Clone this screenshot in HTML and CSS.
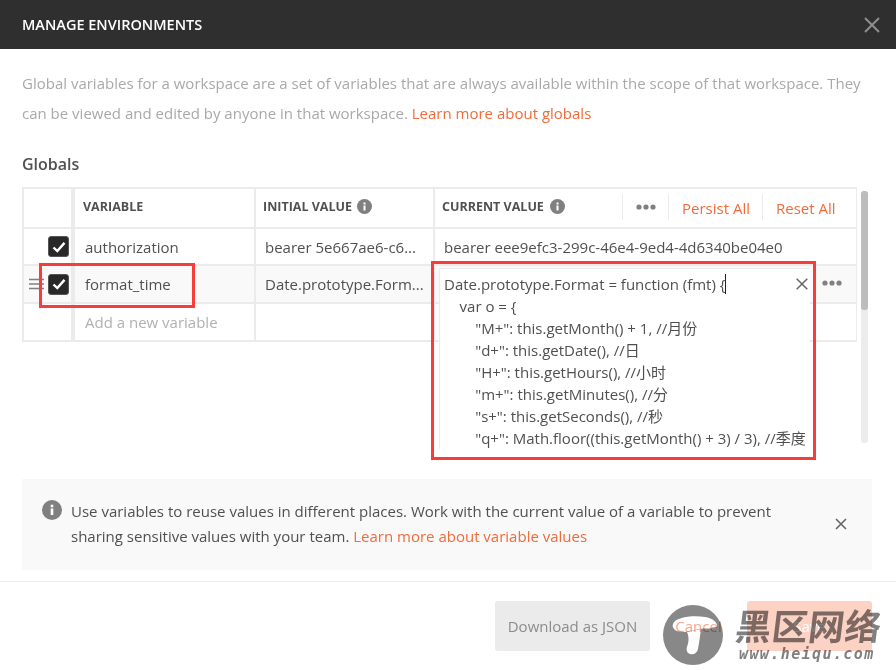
FILE: index.html
```html
<!DOCTYPE html>
<html lang="en">
<head>
<meta charset="utf-8">
<title>Manage Environments</title>
<link rel="stylesheet" href="styles.css">
</head>
<body>
<div class="modal">
  <header class="head">
    <h1>MANAGE ENVIRONMENTS</h1>
    <svg class="head-x" width="16" height="16" viewBox="0 0 16 16"><path d="M1 1l14 14M15 1L1 15" stroke="#8e8e8e" stroke-width="2" fill="none"/></svg>
  </header>
  <main class="content">
    <p class="desc">Global variables for a workspace are a set of variables that are always available within the scope of that workspace. They can be viewed and edited by anyone in that workspace. <a class="link">Learn more about globals</a></p>
    <h2 class="title">Globals</h2>
    <div class="scroller">
      <div class="table">
        <div class="row row-head">
          <div class="cell cell-check"></div>
          <div class="cell th th-var">VARIABLE</div>
          <div class="cell th">INITIAL VALUE <svg class="i" width="15" height="15" viewBox="0 0 15 15"><circle cx="7.5" cy="7.5" r="7.5" fill="#808080"/><rect x="6.5" y="6.5" width="2" height="5" fill="#fff"/><rect x="6.5" y="3.5" width="2" height="2" fill="#fff"/></svg></div>
          <div class="cell th th-current">
            <span class="th-label">CURRENT VALUE <svg class="i" width="15" height="15" viewBox="0 0 15 15"><circle cx="7.5" cy="7.5" r="7.5" fill="#808080"/><rect x="6.5" y="6.5" width="2" height="5" fill="#fff"/><rect x="6.5" y="3.5" width="2" height="2" fill="#fff"/></svg></span>
            <span class="act act-dots"><svg width="20" height="6" viewBox="0 0 20 6"><circle cx="3" cy="3" r="2.6" fill="#808080"/><circle cx="10" cy="3" r="2.6" fill="#808080"/><circle cx="17" cy="3" r="2.6" fill="#808080"/></svg></span>
            <span class="act act-link">Persist All</span>
            <span class="act act-link act-last">Reset All</span>
          </div>
        </div>
        <div class="row row-first">
          <div class="cell cell-check"><span class="check"><svg width="14" height="12" viewBox="0 0 14 12"><path d="M1.5 6.5l3.8 3.6 7.2-8.2" stroke="#fff" stroke-width="2.4" fill="none"/></svg></span></div>
          <div class="cell td td-var">authorization</div>
          <div class="cell td">bearer 5e667ae6-c6...</div>
          <div class="cell td">bearer eee9efc3-299c-46e4-9ed4-4d6340be04e0</div>
        </div>
        <div class="row row-hover">
          <div class="cell cell-check">
            <svg class="drag" width="15" height="12" viewBox="0 0 15 12"><path d="M0 1.5h15M0 6h15M0 10.500h15" stroke="#808080" stroke-width="1.500"/></svg>
            <span class="check"><svg width="14" height="12" viewBox="0 0 14 12"><path d="M1.5 6.5l3.8 3.6 7.2-8.2" stroke="#fff" stroke-width="2.4" fill="none"/></svg></span>
          </div>
          <div class="cell td td-var">format_time</div>
          <div class="cell td">Date.prototype.Form...</div>
          <div class="cell td"><svg class="row-dots" width="20" height="6" viewBox="0 0 20 6"><circle cx="3" cy="3" r="2.6" fill="#808080"/><circle cx="10" cy="3" r="2.6" fill="#808080"/><circle cx="17" cy="3" r="2.6" fill="#808080"/></svg></div>
        </div>
        <div class="row">
          <div class="cell cell-check"></div>
          <div class="cell td td-var placeholder">Add a new variable</div>
          <div class="cell td"></div>
          <div class="cell td"></div>
        </div>
      </div>
      <div class="editor">
        <div class="code"><span class="caret">Date.prototype.Format = function (fmt) {</span>
    var o = {
        "M+": this.getMonth() + 1, //月份
        "d+": this.getDate(), //日
        "H+": this.getHours(), //小时
        "m+": this.getMinutes(), //分
        "s+": this.getSeconds(), //秒
        "q+": Math.floor((this.getMonth() + 3) / 3), //季度</div>
        <svg class="editor-x" width="12" height="12" viewBox="0 0 12 12"><path d="M.7.700l10.600 10.600M11.300.7L.7 11.300" stroke="#666" stroke-width="1.500" fill="none"/></svg>
      </div>
      <div class="mark mark-name"></div>
      <div class="mark mark-editor"></div>
      <div class="scrollbar"><div class="thumb"></div></div>
    </div>
    <div class="note">
      <svg class="note-i" width="20" height="20" viewBox="0 0 20 20"><circle cx="10" cy="10" r="10" fill="#808080"/><rect x="8.700" y="8.500" width="2.600" height="6.500" fill="#fff"/><rect x="8.700" y="4.700" width="2.600" height="2.600" fill="#fff"/></svg>
      <p class="note-text">Use variables to reuse values in different places. Work with the current value of a variable to prevent sharing sensitive values with your team. <a class="link">Learn more about variable values</a></p>
      <svg class="note-x" width="12" height="12" viewBox="0 0 12 12"><path d="M1 1l10 10M11 1L1 11" stroke="#666" stroke-width="1.600" fill="none"/></svg>
    </div>
  </main>
  <footer class="foot">
    <button class="btn btn-json">Download as JSON</button>
    <button class="btn btn-cancel">Cancel</button>
    <button class="btn btn-save">Save</button>
  </footer>
</div>
<div class="watermark">
  <svg class="wm-logo" width="60" height="60" viewBox="0 0 60 60"><circle cx="30" cy="30" r="30" fill="#888"/><path d="M10 19C12 12 30 10 42 12C50 13 55 18 54 22C50 24 42 23 36 24C28 26 18 29 12 25C10 23 9 21 10 19Z" fill="#fff"/><path d="M24 27C28 26 34 25 38 24C37 32 36 38 35 44C34 48 31 50 27 49C24 48 23 45 24 42C26 36 26 32 24 27Z" fill="#fff"/></svg>
  <div class="wm-text">
    <div class="wm-cn">黑区网络</div>
    <div class="wm-url">www.heiqu.com</div>
  </div>
</div>
</body>
</html>
```
FILE: styles.css
```css
* { box-sizing: border-box; }
html, body { margin: 0; height: 670px; overflow: hidden; background: #fff; }
body { font-family: "Open Sans", "Noto Sans CJK SC", sans-serif; color: #505050; position: relative; }
.modal { width: 896px; height: 670px; display: flex; flex-direction: column; }
.head { height: 49px; flex: none; background: #2f2f2f; display: flex; align-items: center; justify-content: space-between; padding: 0 16px 0 22px; }
.head h1 { margin: 0; font-size: 14.500px; font-weight: 600; color: #fff; }
.head-x { display: block; }
.content { flex: 1; padding: 20px 24px 0 22px; min-height: 0; }
.desc { margin: 0; font-size: 15px; line-height: 29.500px; color: #a9a9a9; width: 850px; }
.link { color: #f26b3a; }
.title { margin: 25px 0 0; font-size: 16px; line-height: 22px; font-weight: 600; color: #505050; }
.scroller { position: relative; margin-top: 12px; height: 292px; }
.table { width: 835px; border: 2px solid #ebebeb; border-right-width: 1px; background: #fff; }
.row { display: grid; grid-template-columns: 49px 181px 179px 1fr; height: 38px; border-bottom: 2px solid #ebebeb; }
.row:last-child { border-bottom: 0; height: 36px; }
.row-head { height: 40px; }
.row-first { height: 37px; }
.row-hover { background: #f9f9f9; height: 38px; }
.cell { display: flex; align-items: center; border-left: 2px solid #ebebeb; min-width: 0; position: relative; }
.cell-check { border-left: 0; border-right: 3px solid #ebebeb; justify-content: flex-end; padding-right: 2px; margin-right: -1px; background: #fff; }
.row-hover .cell-check { background: transparent; }
.th { font-size: 12.500px; font-weight: 700; color: #505050; padding-left: 7px; padding-bottom: 3px; gap: 5px; white-space: nowrap; }
.th-var { padding-left: 8px; }
.th-current { padding-right: 0; gap: 0; }
.th-label { display: flex; align-items: center; gap: 6px; width: 180px; flex: none; }
.i { display: block; }
.act { display: flex; align-items: center; height: 26px; border-left: 1px solid #ebebeb; flex: none; }
.act-dots { width: 46px; justify-content: center; }
.act-dots svg { display: block; }
.act-link { color: #f26b3a; font-size: 15px; font-weight: 400; width: 94px; padding-left: 13px; padding-top: 3px; }
.act-last { width: 85px; }
.td { font-size: 15px; padding-left: 9px; white-space: nowrap; overflow: hidden; }
.td-var { padding-left: 10px; }
.placeholder { color: #b0b0b0; }
.row-dots { position: absolute; right: 14px; top: 14px; }
.check { width: 21px; height: 21px; background: #282828; border: 1px solid #555; border-radius: 3px; display: flex; align-items: center; justify-content: center; flex: none; }
.check svg { display: block; }
.drag { position: absolute; left: 5px; top: 12px; }
.editor { position: absolute; left: 417px; top: 81px; width: 371px; height: 181px; background: #fff; border: 1px solid #ebebeb; border-bottom: 0; border-right: 0; overflow: hidden; }
.code { font-size: 15px; line-height: 22px; white-space: pre; padding: 4px 0 0 4px; color: #505050; }
.caret { border-right: 1px solid #222; }
.editor-x { position: absolute; right: 2px; top: 9px; display: block; }
.mark { position: absolute; border: 3px solid #f83c3c; pointer-events: none; }
.mark-name { left: 17px; top: 76px; width: 156px; height: 45px; }
.mark-editor { left: 409px; top: 74px; width: 385px; height: 199px; }
.scrollbar { position: absolute; left: 839px; top: 4px; width: 7px; height: 252px; background: #ececec; border-radius: 3px; }
.thumb { height: 119px; background: #bdbdbd; border-radius: 3px; }
.note { width: 850px; height: 91px; background: #f9f9f9; display: flex; align-items: flex-start; padding: 20px 24px 0 20px; position: relative; }
.note-i { flex: none; display: block; margin-top: 1px; }
.note-text { margin: 0; padding-left: 9px; width: 735px; font-size: 15px; line-height: 25px; color: #505050; }
.note-x { position: absolute; right: 25px; top: 39px; display: block; }
.foot { height: 89px; flex: none; border-top: 1px solid #ebebeb; display: flex; justify-content: flex-end; align-items: flex-start; padding: 19px 24px 0 0; }
.btn { height: 50px; border: 0; border-radius: 3px; font-family: inherit; font-size: 15px; background: transparent; padding: 0; }
.btn-json { width: 155px; background: #ebebeb; color: #8c8c8c; }
.btn-cancel { width: 97px; color: #f8a78c; }
.btn-save { width: 125px; background: #fcd2c4; color: #fff; }
.watermark { position: absolute; left: 663px; top: 605px; display: flex; gap: 13px; mix-blend-mode: multiply; }
.wm-logo { display: block; flex: none; }
.wm-text { display: flex; flex-direction: column; margin-top: -2px; }
.wm-cn { font-family: "Noto Sans CJK SC", sans-serif; font-weight: 700; font-size: 36px; line-height: 43px; color: #808080; letter-spacing: .500px; white-space: nowrap; transform: skewX(-7deg); }
.wm-url { font-family: "DejaVu Sans Mono", monospace; font-style: italic; font-weight: 700; font-size: 15px; line-height: 16px; color: #808080; margin-left: 3px; letter-spacing: 1.400px; white-space: nowrap; }
```
